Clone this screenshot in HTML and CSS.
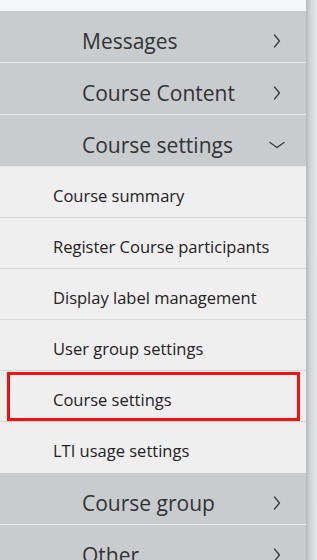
FILE: index.html
```html
<!DOCTYPE html>
<html lang="en">

<head>
  <meta charset="utf-8">
  <meta name="viewport" content="width=device-width, initial-scale=1">
  <title>Course menu</title>
  <link rel="stylesheet" href="styles.css">
</head>

<body>
  <div class="screen">
    <nav class="menu">
      <div class="menu-top"></div>
      <ul class="menu-list">
        <li class="menu-item">
          <a class="menu-link" href="#">Messages
            <span class="chev"><svg width="8" height="14" viewBox="0 0 8 14"><path d="M1.5 1 L6.5 7 L1.5 13" /></svg></span>
          </a>
        </li>
        <li class="menu-item">
          <a class="menu-link" href="#">Course Content
            <span class="chev"><svg width="8" height="14" viewBox="0 0 8 14"><path d="M1.5 1 L6.5 7 L1.5 13" /></svg></span>
          </a>
        </li>
        <li class="menu-item is-open">
          <a class="menu-link" href="#">Course settings
            <span class="chev"><svg width="16" height="8" viewBox="0 0 16 8"><path d="M1 1.5 L8 6.5 L15 1.5" /></svg></span>
          </a>
          <ul class="submenu">
            <li class="submenu-item"><a href="#">Course summary</a></li>
            <li class="submenu-item"><a href="#">Register Course participants</a></li>
            <li class="submenu-item"><a href="#">Display label management</a></li>
            <li class="submenu-item"><a href="#">User group settings</a></li>
            <li class="submenu-item is-marked"><a href="#">Course settings</a></li>
            <li class="submenu-item"><a href="#">LTI usage settings</a></li>
          </ul>
        </li>
        <li class="menu-item">
          <a class="menu-link" href="#">Course group
            <span class="chev"><svg width="8" height="14" viewBox="0 0 8 14"><path d="M1.5 1 L6.5 7 L1.5 13" /></svg></span>
          </a>
        </li>
        <li class="menu-item">
          <a class="menu-link" href="#">Other
            <span class="chev"><svg width="8" height="14" viewBox="0 0 8 14"><path d="M1.5 1 L6.5 7 L1.5 13" /></svg></span>
          </a>
        </li>
      </ul>
    </nav>
    <div class="edge"></div>
  </div>
</body>

</html>
```

FILE: styles.css
```css
* {
  margin: 0;
  padding: 0;
  box-sizing: border-box;
}

body {
  font-family: 'Open Sans', 'Noto Sans', sans-serif;
  color: #333;
  background-color: #e6e7e8;
  overflow: hidden;
}

.screen {
  display: flex;
  width: 317px;
  height: 560px;
  overflow: hidden;
}

.menu {
  width: 306px;
  flex-shrink: 0;
}

.edge {
  flex: 1;
  background: linear-gradient(to right, #b7babc, #d3d5d7 40%, #e4e5e6);
}

.menu-top {
  height: 11px;
  background-color: #f4f6fa;
}

.menu-list,
.submenu {
  list-style: none;
}

.menu-link {
  display: flex;
  align-items: center;
  justify-content: space-between;
  height: 52px;
  padding: 8px 21px 0 82px;
  font-size: 21px;
  color: #333;
  text-decoration: none;
  background-color: #c8cccf;
  border-bottom: 1px solid #e8eaec;
}

.chev {
  display: flex;
  justify-content: center;
  align-items: center;
  width: 16px;
}

.chev svg {
  display: block;
}

.chev path {
  fill: none;
  stroke: #3a3a3a;
  stroke-width: 1.3;
  stroke-linecap: round;
  stroke-linejoin: round;
}

.submenu {
  background-color: #efefef;
}

.submenu-item {
  position: relative;
  border-bottom: 1px solid #d6d6d6;
}

.submenu-item a {
  display: flex;
  align-items: center;
  height: 50px;
  padding: 7px 0 0 53px;
  font-size: 16.5px;
  color: #222;
  text-decoration: none;
}

.submenu-item:last-child {
  border-bottom: none;
  height: 51px;
}

.is-marked::after {
  content: '';
  position: absolute;
  left: 7px;
  right: 6px;
  top: 1px;
  bottom: 0;
  border: 3px solid #f21010;
}
```
